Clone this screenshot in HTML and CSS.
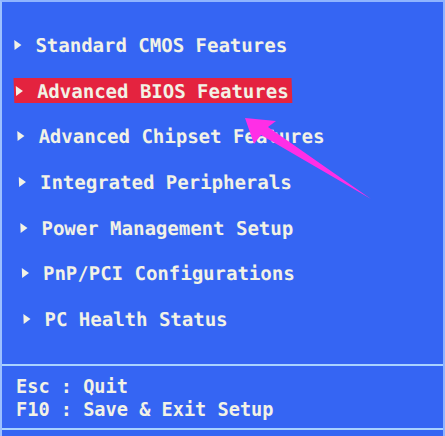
FILE: index.html
```html
<!DOCTYPE html>
<html>
<head>
  <title>CMOS Setup Utility</title>
  <meta charset="utf-8">
  <link rel="stylesheet" href="styles.css">
</head>
<body>
  <div class="screen">
    <ul class="menu">
      <li class="item"><span class="mark"></span>Standard CMOS Features</li>
      <li class="item selected"><span class="mark"></span>Advanced BIOS Features</li>
      <li class="item"><span class="mark"></span>Advanced Chipset Features</li>
      <li class="item"><span class="mark"></span>Integrated Peripherals</li>
      <li class="item"><span class="mark"></span>Power Management Setup</li>
      <li class="item"><span class="mark"></span>PnP/PCI Configurations</li>
      <li class="item"><span class="mark"></span>PC Health Status</li>
    </ul>

    <div class="keys">
      <div class="key">Esc : Quit</div>
      <div class="key">F10 : Save &amp; Exit Setup</div>
    </div>

    <!-- pointer drawn over the screenshot -->
    <svg class="pointer" width="445" height="436" viewBox="0 0 445 436">
      <polygon points="245,118 276,121 268,127 371,199 261,135 254,144" fill="#ff2ee6"/>
    </svg>
  </div>
</body>
</html>
```

FILE: styles.css
```css
html, body {
    margin: 0;
    padding: 0;
    background: #3463f2;
}

.screen {
    position: relative;
    width: 445px;
    height: 436px;
    box-sizing: border-box;
    background: #3565f3;
    border-top: 2px solid #8fb4ff;
    border-left: 2px solid #9cc0ff;
    border-right: 2px solid #8fb4ff;
    display: flex;
    flex-direction: column;
    font-family: "DejaVu Sans Mono", "Liberation Mono", monospace;
    font-weight: bold;
    color: #f2f2e6;
    overflow: hidden;
}

.menu {
    list-style: none;
    margin: 0;
    padding: 30px 0 0 9px;
    display: flex;
    flex-direction: column;
    gap: 20px;
    transform-origin: 0 0;
    transform: skewX(1.9deg);
    height: 330px;
    box-sizing: border-box;
}

.item {
    display: flex;
    align-items: center;
    width: fit-content;
    height: 26px;
    padding: 0 3px 0 2px;
    font-size: 19px;
    white-space: pre;
}

.mark {
    width: 0;
    height: 0;
    border-left: 7px solid #f2f2e6;
    border-top: 5px solid transparent;
    border-bottom: 5px solid transparent;
    margin-right: 14px;
}

.selected {
    background: #e4233f;
}

.keys {
    margin-top: 32px;
    border-top: 2px solid #a9d2ff;
    border-bottom: 2px solid #a9d2ff;
    padding: 10px 0 7px 14px;
    display: flex;
    flex-direction: column;
    gap: 1px;
}

.key {
    font-size: 18.6px;
    line-height: 22px;
    white-space: pre;
}

.pointer {
    position: absolute;
    top: -2px;
    left: -2px;
}
```
